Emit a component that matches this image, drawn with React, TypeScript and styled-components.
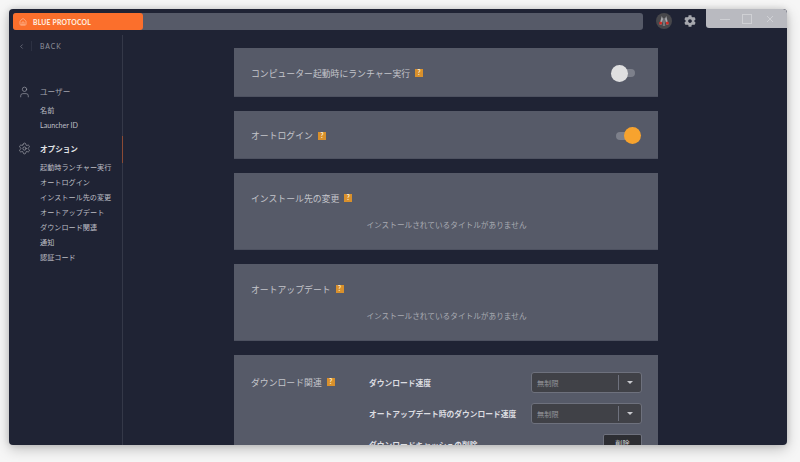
import styled, { createGlobalStyle } from "styled-components";
import { Settings, User, Home, ChevronLeft } from "lucide-react";
import { FaCog } from "react-icons/fa";

const GlobalStyle = createGlobalStyle`
  html, body {
    margin: 0;
    height: 462px;
    overflow: hidden;
    background: #f6f6f6;
  }
  * { box-sizing: border-box; }
  body {
    font-family: "Lato", "Noto Sans CJK JP", sans-serif;
    color: #c9cad0;
  }
`;

const Desktop = styled.div`
  padding: 9px 13px 17px 9px;
  height: 462px;
`;

const Window = styled.div`
  position: relative;
  height: 436px;
  background: #1f2334;
  border-radius: 4px;
  box-shadow: 0 4px 14px rgba(0, 0, 0, 0.22), 0 0 6px rgba(0, 0, 0, 0.14);
  display: flex;
  flex-direction: column;
  overflow: hidden;
`;

const TitleBar = styled.div`
  display: flex;
  align-items: flex-start;
  height: 26px;
  padding: 4px 0 0 4px;
  flex: none;
`;

const TabTrack = styled.div`
  width: 630px;
  height: 17px;
  background: #565a68;
  border-radius: 3px;
  display: flex;
`;

const ActiveTab = styled.div`
  width: 130px;
  height: 17px;
  background: #fb6f2c;
  border-radius: 3px;
  display: flex;
  align-items: center;
  gap: 6px;
  padding-left: 6px;
  color: #ffeadd;
  font-size: 6.8px;
  font-weight: 900;
  letter-spacing: 0.2px;
`;

const Avatar = styled.svg`
  margin-left: 12px;
  flex: none;
`;

const GearButton = styled.div`
  margin: 2px 0 0 11px;
  display: flex;
  color: #a6a8ae;
`;

const WindowControls = styled.div`
  position: absolute;
  top: 0;
  right: 0;
  width: 81px;
  height: 19px;
  background: #b9bac0;
  border-radius: 0 4px 0 3px;
  display: flex;
  align-items: center;
  padding-left: 14px;
`;

const Controls = styled.svg`
  display: block;
`;

const Body = styled.div`
  flex: 1;
  display: flex;
  min-height: 0;
`;

const Sidebar = styled.aside`
  position: relative;
  width: 114px;
  flex: none;
  border-right: 1px solid #343848;
  padding-top: 5px;
`;

const Marker = styled.div`
  position: absolute;
  right: -1px;
  top: 101px;
  width: 1px;
  height: 27px;
  background: #8a4a35;
`;

const BackRow = styled.div`
  display: flex;
  align-items: center;
  height: 12px;
  padding-left: 9px;
  color: #8f919c;
  font-size: 6.8px;
  letter-spacing: 1px;
`;

const BackDivider = styled.span`
  width: 1px;
  height: 10px;
  background: #2d3142;
  margin: 0 8px 0 6px;
`;

const Section = styled.div<{ $top: number }>`
  margin-top: ${(p) => p.$top}px;
`;

const SectionHead = styled.div<{ $active?: boolean }>`
  display: flex;
  align-items: center;
  height: 15px;
  padding-left: 9px;
  gap: 9px;
  font-size: 7.6px;
  font-weight: ${(p) => (p.$active ? 700 : 400)};
  color: ${(p) => (p.$active ? "#e2e3e7" : "#a2a4ad")};
`;

const SectionIcon = styled.span`
  width: 13px;
  display: flex;
  justify-content: center;
  color: #a2a4ad;
  flex: none;
`;

const NavList = styled.div`
  display: flex;
  flex-direction: column;
  padding-left: 31px;
  margin-top: 4px;
`;

const NavItem = styled.div`
  height: 15px;
  line-height: 15px;
  font-size: 7.15px;
  color: #bdbec4;
  white-space: nowrap;
`;

const Content = styled.main`
  flex: 1;
  padding: 13px 0 0 111px;
  display: flex;
  flex-direction: column;
  gap: 14px;
  overflow: hidden;
`;

const Panel = styled.section<{ $h: number }>`
  width: 424px;
  height: ${(p) => p.$h}px;
  flex: none;
  background: #565a68;
  padding: 0 16px 0 17px;
  border-bottom: 1px solid #4d5160;
`;

const ToggleRow = styled.div<{ $h: number }>`
  height: ${(p) => p.$h}px;
  display: flex;
  align-items: center;
  justify-content: space-between;
  padding-right: 7px;
`;

const TitleRow = styled.div`
  height: 40px;
  padding-top: 10px;
  display: flex;
  align-items: center;
`;

const Label = styled.div`
  display: flex;
  align-items: center;
  gap: 5px;
  font-size: 8.85px;
  color: #c4c5cb;
  white-space: nowrap;
`;

const Help = styled.span`
  width: 8px;
  height: 8px;
  background: #d8902c;
  color: #fff3d8;
  font-size: 6.5px;
  font-weight: 700;
  line-height: 8px;
  text-align: center;
  flex: none;
`;

const Track = styled.div`
  position: relative;
  width: 19px;
  height: 8px;
  border-radius: 4px;
  background: #7d808b;
`;

const Knob = styled.span<{ $on?: boolean }>`
  position: absolute;
  top: -4.5px;
  width: 17px;
  height: 17px;
  border-radius: 50%;
  left: ${(p) => (p.$on ? "8px" : "-5px")};
  background: ${(p) => (p.$on ? "#f7a32e" : "#dfdfe0")};
`;

const EmptyNote = styled.div`
  margin-top: 6px;
  line-height: 12px;
  text-align: center;
  font-size: 7.67px;
  color: #a8aab2;
`;

const DownloadGrid = styled.div`
  display: flex;
  padding-top: 20px;
`;

const DownloadLabel = styled(Label)`
  width: 118px;
  height: 14px;
  flex: none;
  align-self: flex-start;
`;

const OptionColumn = styled.div`
  display: flex;
  flex-direction: column;
  gap: 10px;
  flex: 1;
  margin-top: -3px;
`;

const OptionRow = styled.div`
  display: flex;
  align-items: center;
  justify-content: space-between;
  height: 21px;
  font-size: 7.75px;
  font-weight: 700;
  color: #dcdde1;
  white-space: nowrap;
`;

const Select = styled.div`
  width: 111px;
  height: 21px;
  flex: none;
  display: flex;
  align-items: center;
  background: #404147;
  border: 1px solid #6e717d;
  border-radius: 3px;
  font-weight: 400;
  font-size: 7.2px;
  color: #94959c;
  padding-left: 5px;
`;

const SelectText = styled.span`
  flex: 1;
`;

const SelectArrow = styled.span`
  width: 23px;
  height: 15px;
  border-left: 1px solid #6e717d;
  display: flex;
  align-items: center;
  justify-content: center;
  &::after {
    content: "";
    border-left: 3px solid transparent;
    border-right: 3px solid transparent;
    border-top: 3px solid #c8c9ce;
  }
`;

const DeleteButton = styled.div`
  width: 39px;
  height: 22px;
  flex: none;
  background: #2d2e33;
  border: 1px solid #6e717d;
  border-radius: 2px;
  text-align: center;
  line-height: 18px;
  font-size: 7.2px;
  font-weight: 400;
  color: #d2d3d6;
`;

const userItems = ["名前", "Launcher ID"];
const optionItems = [
  "起動時ランチャー実行",
  "オートログイン",
  "インストール先の変更",
  "オートアップデート",
  "ダウンロード関連",
  "通知",
  "認証コード",
];

const NO_TITLE = "インストールされているタイトルがありません";

export default function App() {
  return (
    <>
      <GlobalStyle />
      <Desktop>
        <Window>
          <TitleBar>
            <TabTrack>
              <ActiveTab>
                <Home size={8} strokeWidth={2} color="#ffc9ae" />
                BLUE PROTOCOL
              </ActiveTab>
            </TabTrack>
            <Avatar width="18" height="16" viewBox="0 0 18 16">
              <circle cx="9" cy="8" r="8" fill="#47474b" />
              <path d="M6.800 3 4.500 11.500h2.200L8 6zM11.200 3l2.300 8.500h-2.200L10 6z" fill="#a9a9ad" />
              <path d="M8.400 5h1.200l.6 8H7.800z" fill="#77777c" />
              <circle cx="5.600" cy="10" r="1.500" fill="#d22b25" />
              <circle cx="12.400" cy="10" r="1.500" fill="#d22b25" />
            </Avatar>
            <GearButton>
              <FaCog size={12} />
            </GearButton>
          </TitleBar>
          <WindowControls>
            <Controls width="60" height="12" viewBox="0 0 60 12">
              <path d="M0 6.500h10" stroke="#cfd0d4" strokeWidth="1" />
              <rect x="22.500" y="1.500" width="9" height="9" fill="none" stroke="#cfd0d4" />
              <path d="M47 3l6 6M53 3l-6 6" stroke="#cfd0d4" strokeWidth="1" />
            </Controls>
          </WindowControls>
          <Body>
            <Sidebar>
              <Marker />
              <BackRow>
                <ChevronLeft size={7} strokeWidth={2} />
                <BackDivider />
                BACK
              </BackRow>
              <Section $top={32}>
                <SectionHead>
                  <SectionIcon>
                    <User size={14} strokeWidth={1.2} />
                  </SectionIcon>
                  ユーザー
                </SectionHead>
                <NavList>
                  {userItems.map((item) => (
                    <NavItem key={item}>{item}</NavItem>
                  ))}
                </NavList>
              </Section>
              <Section $top={8}>
                <SectionHead $active>
                  <SectionIcon>
                    <Settings size={13} strokeWidth={1.3} />
                  </SectionIcon>
                  オプション
                </SectionHead>
                <NavList>
                  {optionItems.map((item) => (
                    <NavItem key={item}>{item}</NavItem>
                  ))}
                </NavList>
              </Section>
            </Sidebar>
            <Content>
              <Panel $h={49}>
                <ToggleRow $h={50}>
                  <Label>
                    コンピューター起動時にランチャー実行<Help>?</Help>
                  </Label>
                  <Track>
                    <Knob />
                  </Track>
                </ToggleRow>
              </Panel>
              <Panel $h={48}>
                <ToggleRow $h={49}>
                  <Label>
                    オートログイン<Help>?</Help>
                  </Label>
                  <Track>
                    <Knob $on />
                  </Track>
                </ToggleRow>
              </Panel>
              <Panel $h={77}>
                <TitleRow>
                  <Label>
                    インストール先の変更<Help>?</Help>
                  </Label>
                </TitleRow>
                <EmptyNote>{NO_TITLE}</EmptyNote>
              </Panel>
              <Panel $h={77}>
                <TitleRow>
                  <Label>
                    オートアップデート<Help>?</Help>
                  </Label>
                </TitleRow>
                <EmptyNote>{NO_TITLE}</EmptyNote>
              </Panel>
              <Panel $h={120}>
                <DownloadGrid>
                  <DownloadLabel>
                    ダウンロード関連<Help>?</Help>
                  </DownloadLabel>
                  <OptionColumn>
                    <OptionRow>
                      ダウンロード速度
                      <Select>
                        <SelectText>無制限</SelectText>
                        <SelectArrow />
                      </Select>
                    </OptionRow>
                    <OptionRow>
                      オートアップデート時のダウンロード速度
                      <Select>
                        <SelectText>無制限</SelectText>
                        <SelectArrow />
                      </Select>
                    </OptionRow>
                    <OptionRow>
                      ダウンロードキャッシュの削除
                      <DeleteButton>削除</DeleteButton>
                    </OptionRow>
                  </OptionColumn>
                </DownloadGrid>
              </Panel>
            </Content>
          </Body>
        </Window>
      </Desktop>
    </>
  );
}
